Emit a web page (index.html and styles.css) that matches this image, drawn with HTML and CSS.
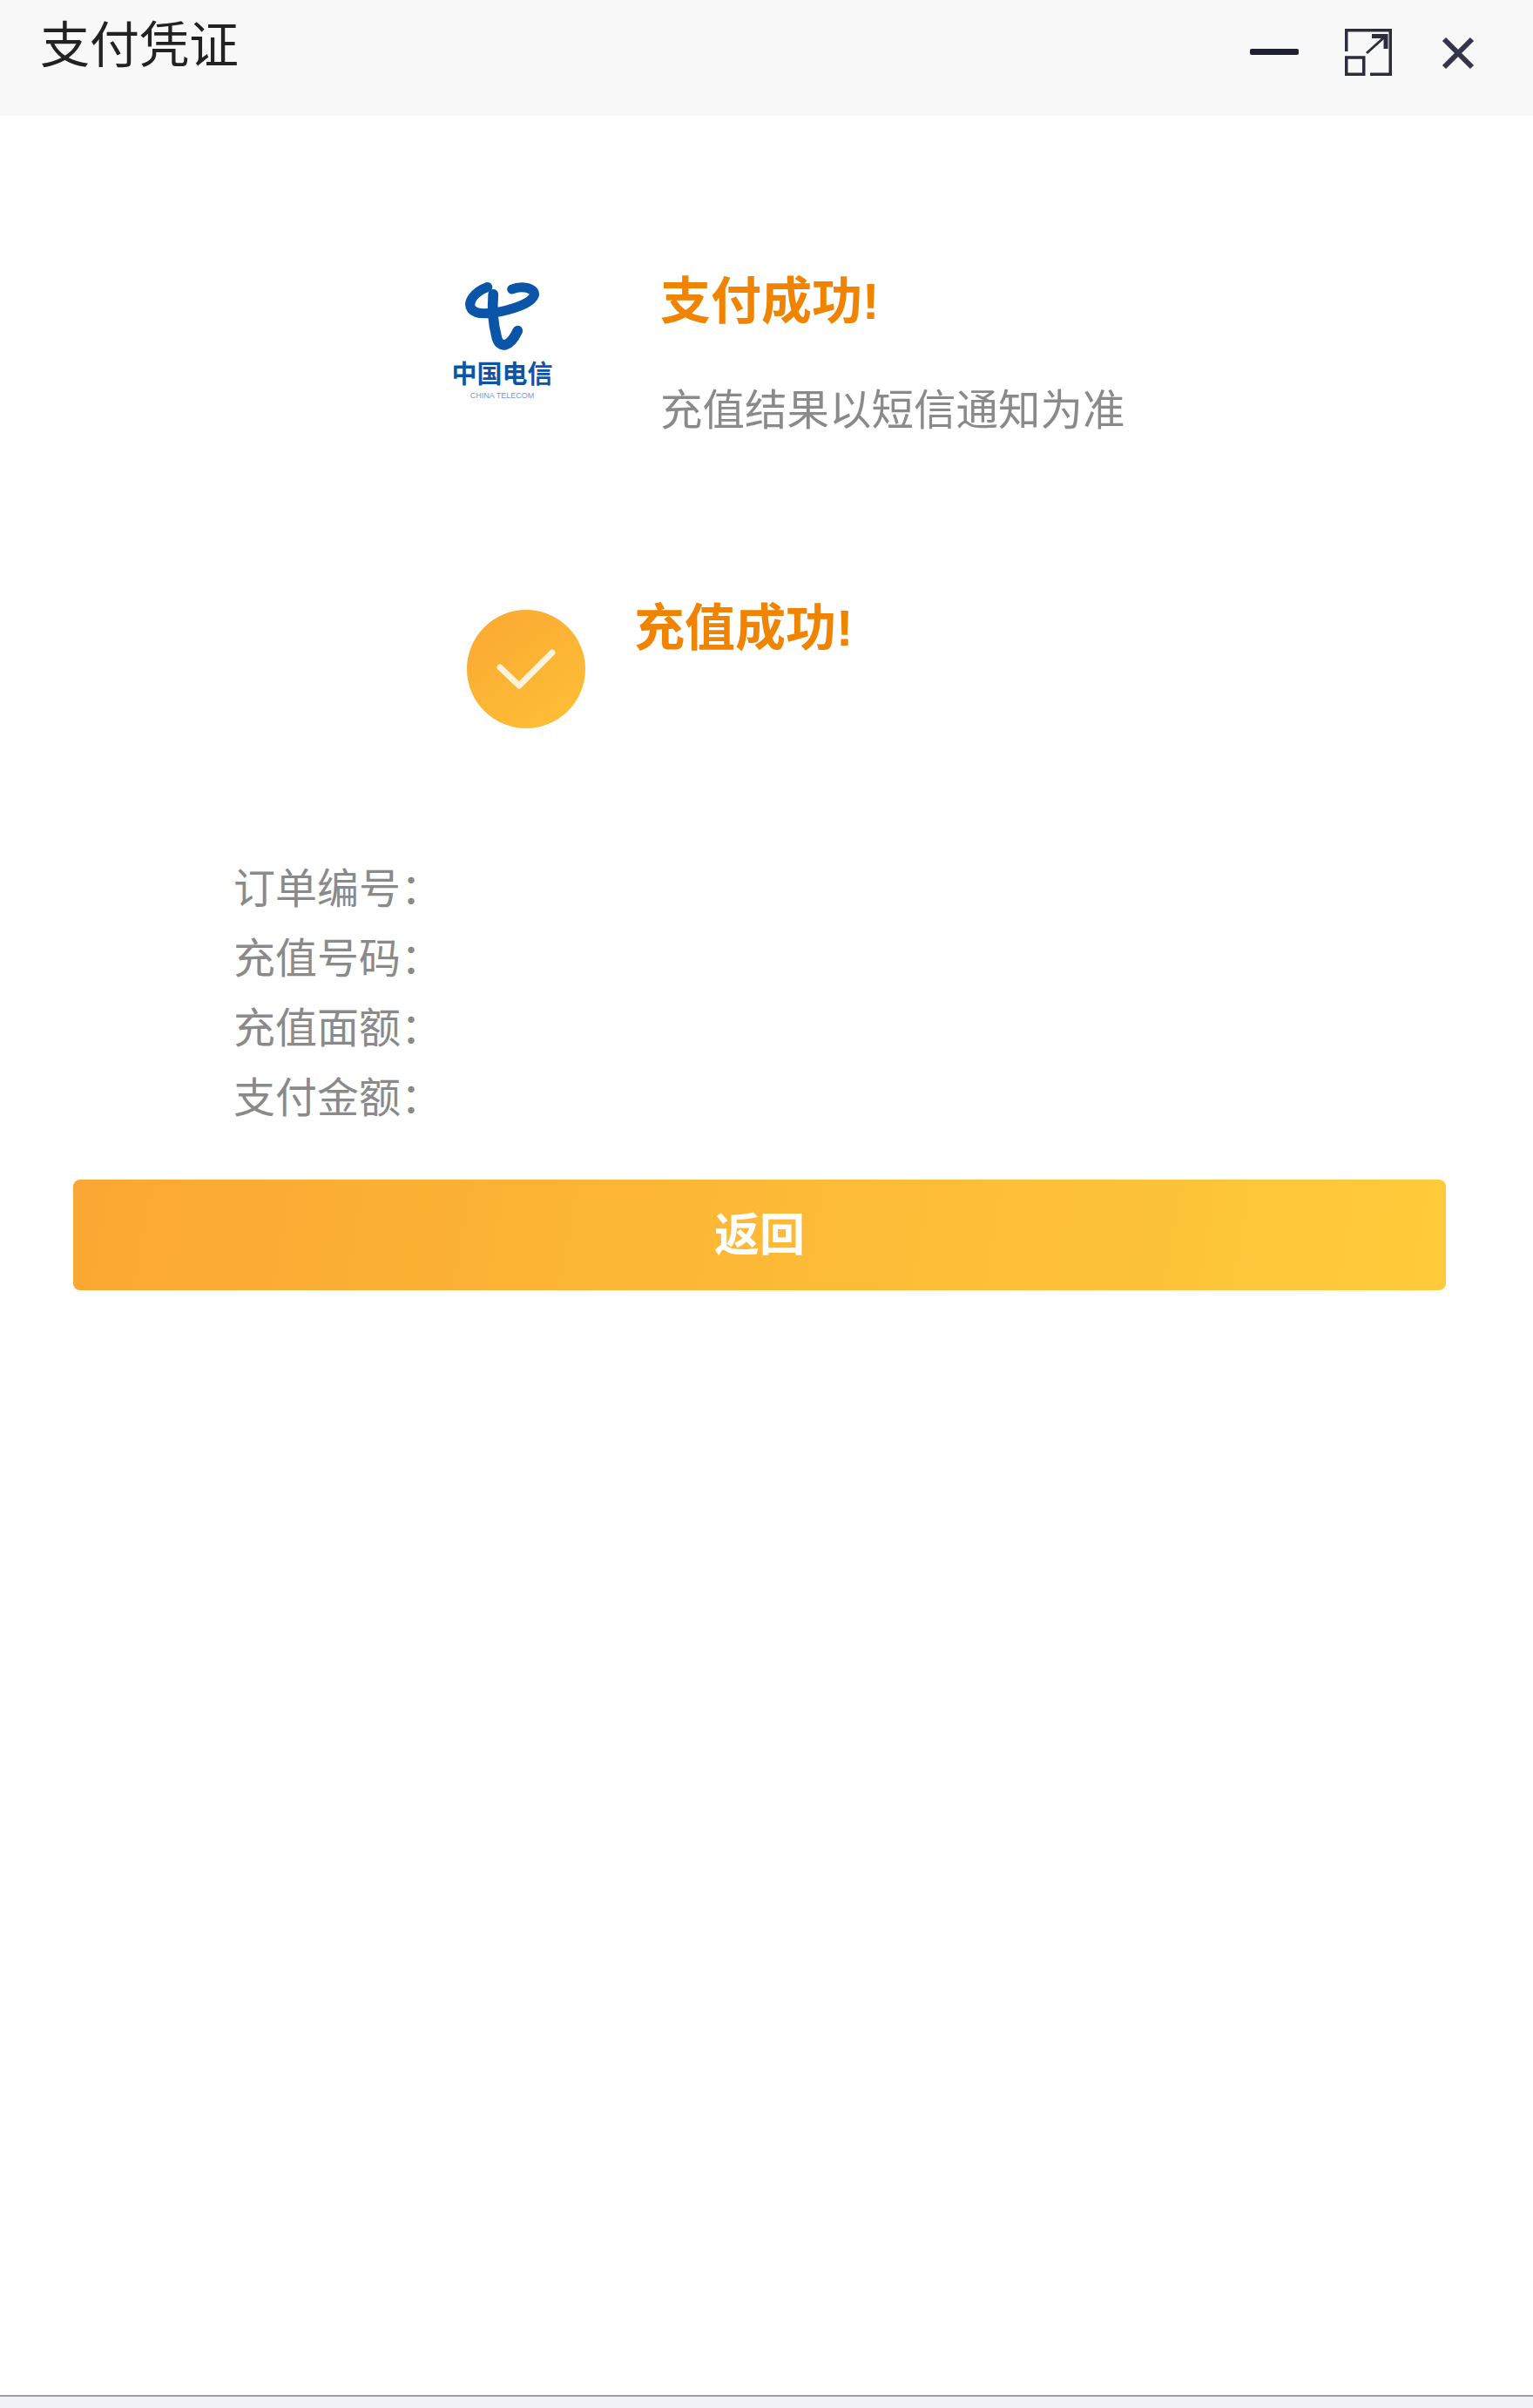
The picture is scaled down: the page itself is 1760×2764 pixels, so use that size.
FILE: index.html
```html
<!DOCTYPE html>
<html lang="zh-CN">
<head>
<meta charset="utf-8">
<title>支付凭证</title>
<link rel="stylesheet" href="styles.css">
</head>
<body>
<div class="page">
  <header class="titlebar">
    <h1 class="title">支付凭证</h1>
    <div class="controls">
      <svg class="icon-min" viewBox="0 0 56 10"><rect x="0" y="1" width="56" height="7" rx="2" fill="#1f2233"/></svg>
      <svg class="icon-expand" viewBox="0 0 54 54" fill="none" stroke="#2a2d3c" stroke-width="3.500"><path d="M1.750 26V1.750H52.250V52.250H29"/><rect x="1.750" y="33" width="20" height="19.250"/><path d="M25 28L45 10" stroke-width="3"/><path d="M31 8.500H47V23" stroke-width="5"/></svg>
      <svg class="icon-close" viewBox="0 0 38 38" fill="none" stroke="#33364a" stroke-width="6"><path d="M3 3L35 35M35 3L3 35"/></svg>
    </div>
  </header>
  <main class="content">
    <section class="notice">
      <div class="logo">
        <svg class="logo-mark" viewBox="90 66 270 264" fill="none" stroke="#0b55a8" stroke-linecap="round">
          <path d="M172 92C122 110 100 148 116 170C134 194 205 186 266 166C322 148 346 124 334 108C322 92 285 88 258 100" stroke-width="34"/>
          <path d="M192 118C188 170 194 230 204 268C214 310 250 306 278 246" stroke-width="36"/>
        </svg>
        <span class="logo-cn">中国电信</span>
        <span class="logo-en">CHINA TELECOM</span>
      </div>
      <div class="notice-text">
        <p class="heading">支付成功!</p>
        <p class="sub">充值结果以短信通知为准</p>
      </div>
    </section>
    <section class="result">
      <div class="check">
        <svg viewBox="0 0 136 136" fill="none" stroke="#fdf3d8" stroke-width="7" stroke-linecap="round" stroke-linejoin="round"><path d="M38 66L60 87L98 49"/></svg>
      </div>
      <p class="heading">充值成功!</p>
    </section>
    <ul class="fields">
      <li>订单编号：</li>
      <li>充值号码：</li>
      <li>充值面额：</li>
      <li>支付金额：</li>
    </ul>
    <button class="back" type="button">返回</button>
  </main>
  <div class="bottom-strip"></div>
</div>
</body>
</html>
```
FILE: styles.css
```css
* { box-sizing: border-box; }
html, body { margin: 0; padding: 0; background: #fff; }
body { font-family: "Liberation Sans", "Noto Sans CJK SC", sans-serif; }
p, h1, ul { margin: 0; padding: 0; }
.page { display: flex; flex-direction: column; height: 2764px; }
.titlebar {
  display: flex; justify-content: space-between; align-items: flex-start;
  height: 133px; padding: 22px 65px 0 46px; background: #f8f8f9; flex: none;
}
.title { font-size: 57px; line-height: 60px; font-weight: 400; color: #222; }
.controls { display: flex; align-items: flex-start; padding-top: 11px; }
.icon-min { width: 56px; height: 10px; margin-top: 22px; }
.icon-expand { width: 54px; height: 54px; margin-left: 53px; }
.icon-close { width: 38px; height: 38px; margin: 9px 2px 0 57px; }
.content { flex: 1; display: flex; flex-direction: column; }
.notice { display: flex; margin: 187px 0 0 518px; }
.logo { width: 117px; display: flex; flex-direction: column; align-items: center; color: #0b55a8; }
.logo-mark { width: 88px; height: 88px; }
.logo-cn { font-size: 29px; line-height: 32px; font-weight: 700; margin-top: 6px; white-space: nowrap; }
.logo-en { font-family: "Liberation Sans", sans-serif; font-size: 9px; line-height: 11px; margin-top: 3px; white-space: nowrap; opacity: .6; }
.notice-text { margin: -6px 0 0 123px; }
.heading { font-size: 58px; line-height: 64px; font-weight: 700; color: #f08400; white-space: nowrap; }
.sub { font-size: 48.500px; line-height: 60px; color: #8a8a8a; margin-top: 63px; white-space: nowrap; }
.result { display: flex; align-items: flex-start; margin: 188px 0 0 536px; }
.check { width: 136px; height: 136px; border-radius: 50%; background: linear-gradient(145deg, #fba833, #fec037); margin-top: 11px; }
.check svg { display: block; width: 136px; height: 136px; }
.result .heading { margin-left: 56px; }
.fields { list-style: none; margin: 145px 0 0 268px; color: #8a8a8a; font-size: 48px; line-height: 80px; }
.back {
  display: block; width: 1576px; height: 127px; margin: 53px 0 0 84px;
  border: 0; border-radius: 8px; background: linear-gradient(100deg, #fba733, #fecb3a);
  color: #fff; font: 700 52px/1 "Liberation Sans", "Noto Sans CJK SC", sans-serif;
}
.bottom-strip { height: 15px; flex: none; background: #eff3f7; border-top: 2px solid #9a9ea3; }
```
